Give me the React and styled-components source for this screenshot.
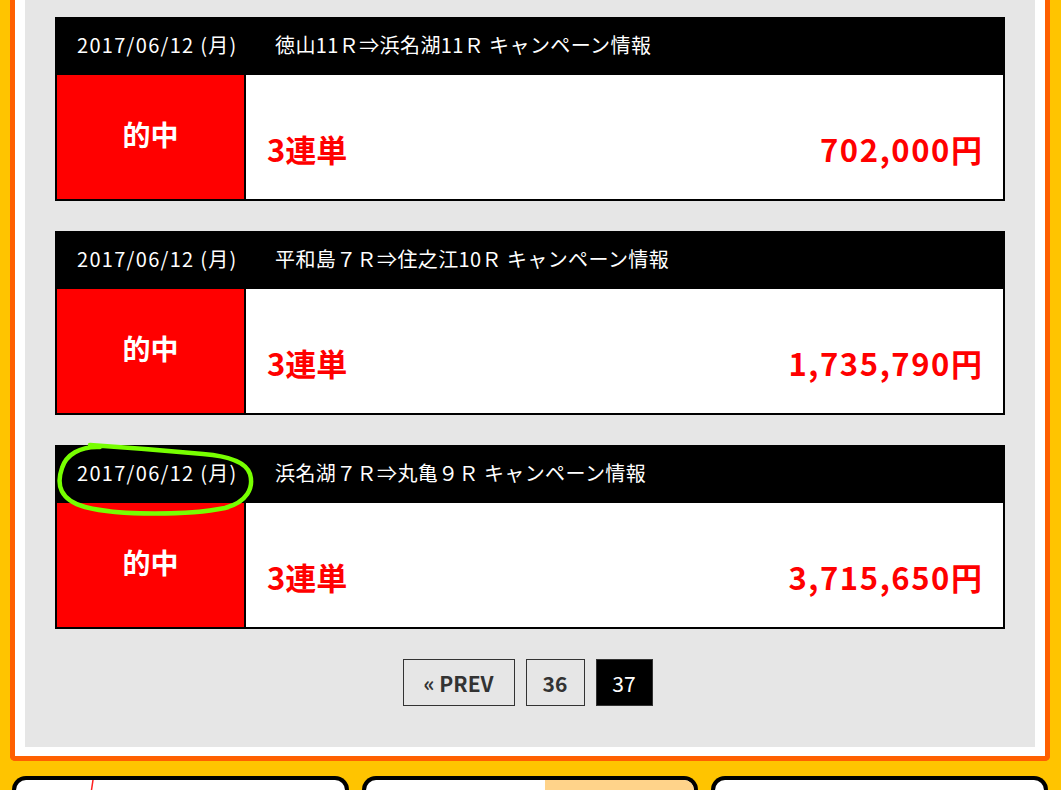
import React from "react";
import styled, { createGlobalStyle } from "styled-components";

const Global = createGlobalStyle`
  html, body { margin: 0; padding: 0; background: #ffc400; overflow: hidden; }
  body { font-family: "Noto Sans CJK JP", "Noto Sans", sans-serif; }
  * { box-sizing: border-box; }
`;

const Page = styled.div`
  width: 1061px;
  height: 790px;
  overflow: hidden;
  background: #ffc400;
`;

const FrameWrap = styled.div`
  padding: 0 11px 0 10px;
`;

const Frame = styled.div`
  background: #fff;
  border: 5px solid #ff6000;
  border-top: none;
  border-radius: 0 0 5px 5px;
  padding: 0 10px 9px 10px;
`;

const Panel = styled.div`
  position: relative;
  background: #e6e6e6;
  padding: 17px 30px 41px 30px;
  display: flex;
  flex-direction: column;
  gap: 30px;
`;

const Entry = styled.div`
  border: 2px solid #000;
  background: #fff;
`;

const EntryHead = styled.div`
  height: 56px;
  padding-bottom: 5px;
  background: #000;
  color: #fff;
  display: flex;
  align-items: center;
  font-size: 20px;
  font-family: "Noto Sans CJK JP", sans-serif;
`;

const DateCell = styled.div`
  width: 218px;
  padding-left: 20px;
  letter-spacing: 1.3px;
  white-space: nowrap;
`;

const Title = styled.div`
  white-space: nowrap;
  letter-spacing: 0.4px;
`;

const EntryBody = styled.div`
  display: grid;
  grid-template-columns: 189px 1fr;
  height: 124px;
`;

const HitCell = styled.div`
  background: #ff0000;
  border-right: 2px solid #000;
  color: #fff;
  font-weight: 700;
  font-size: 28px;
  line-height: 1;
  display: flex;
  justify-content: center;
  padding-top: 45px;
`;

const ResultCell = styled.div`
  display: flex;
  justify-content: space-between;
  align-items: flex-start;
  padding: 58px 21px 0 21px;
  color: #ff0000;
  font-weight: 700;
  font-size: 31px;
  line-height: 1;
`;

const BetType = styled.span``;

const Amount = styled.span`
  letter-spacing: 1.6px;
  margin-right: -1.6px;
`;

const Pager = styled.div`
  display: flex;
  justify-content: center;
  gap: 11px;
  padding-right: 5px;
`;

const PageBtn = styled.div`
  width: ${(p) => p.$w}px;
  height: 47px;
  display: flex;
  align-items: center;
  justify-content: center;
  border: 1px solid #333;
  background: ${(p) => (p.$active ? "#000" : "transparent")};
  color: ${(p) => (p.$active ? "#fff" : "#333")};
  font-weight: ${(p) => (p.$active ? 400 : 700)};
  font-size: 21px;
`;

const Annotation = styled.svg`
  position: absolute;
  left: 15px;
  top: 430px;
  width: 240px;
  height: 100px;
  overflow: visible;
  pointer-events: none;
`;

const CardRow = styled.div`
  display: grid;
  grid-template-columns: repeat(3, 1fr);
  gap: 13px;
  padding: 0 13px 0 12px;
  margin-top: 15px;
`;

const Card = styled.div`
  position: relative;
  height: 80px;
  background: #fff;
  border: 4px solid #000;
  border-bottom: none;
  border-radius: 14px 14px 0 0;
  overflow: hidden;
`;

const Peach = styled.div`
  position: absolute;
  top: 0;
  right: 0;
  width: 149px;
  height: 100%;
  background: #ffd38a;
`;

const Deco = styled.svg`
  position: absolute;
  top: 0;
  left: 0;
  width: 100%;
  height: 100%;
`;

const entries = [
  { title: "徳山11Ｒ⇒浜名湖11Ｒ キャンペーン情報", amount: "702,000円" },
  { title: "平和島７Ｒ⇒住之江10Ｒ キャンペーン情報", amount: "1,735,790円" },
  { title: "浜名湖７Ｒ⇒丸亀９Ｒ キャンペーン情報", amount: "3,715,650円" },
];

export default function App() {
  return (
    <Page>
      <Global />
      <FrameWrap>
        <Frame>
          <Panel>
            {entries.map((e, i) => (
              <Entry key={i}>
                <EntryHead>
                  <DateCell>2017/06/12 (月)</DateCell>
                  <Title>{e.title}</Title>
                </EntryHead>
                <EntryBody>
                  <HitCell>的中</HitCell>
                  <ResultCell>
                    <BetType>3連単</BetType>
                    <Amount>{e.amount}</Amount>
                  </ResultCell>
                </EntryBody>
              </Entry>
            ))}
            <Pager>
              <PageBtn $w={112}>« PREV</PageBtn>
              <PageBtn $w={59}>36</PageBtn>
              <PageBtn $w={57} $active>37</PageBtn>
            </Pager>
            <Annotation viewBox="0 0 240 100">
              <path
                d="M 60 17 C 40 16, 26 25, 22 38 C 16 55, 20 70, 45 77 C 80 86, 150 85, 185 78 C 207 72, 214 58, 210 44 C 206 32, 188 26, 163 24 C 120 20, 80 17, 50 15"
                fill="none"
                stroke="#77ff00"
                strokeWidth="4.5"
                strokeLinecap="round"
                strokeLinejoin="round"
              />
            </Annotation>
          </Panel>
        </Frame>
      </FrameWrap>
      <CardRow>
        <Card>
          <Deco>
            <line x1="77" y1="0" x2="74" y2="20" stroke="#ff2020" strokeWidth="1.5" />
          </Deco>
        </Card>
        <Card>
          <Peach />
        </Card>
        <Card>
          <Deco>
            <circle cx="242" cy="30" r="20" fill="#4a7090" />
          </Deco>
        </Card>
      </CardRow>
    </Page>
  );
}
